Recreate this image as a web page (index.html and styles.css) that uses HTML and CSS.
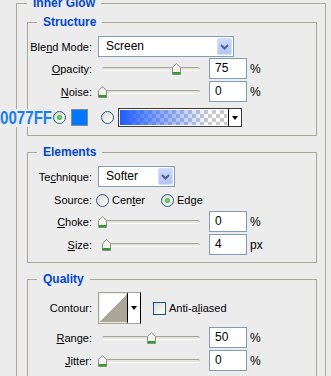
FILE: index.html
```html
<!DOCTYPE html>
<html lang="en">
  <head>
    <meta charset="UTF-8" />
    <meta name="viewport" content="width=device-width, initial-scale=1.0" />
    <title>Inner Glow</title>

    <link rel="stylesheet" href="styles.css">
  </head>
  <body>
    <fieldset class="group group--outer">
      <legend>Inner Glow</legend>

      <fieldset class="group group--structure">
        <legend>Structure</legend>
        <div class="row row--select">
          <span class="rowLabel">Ble<u>n</u>d Mode:</span>
          <div class="select select--wide">
            <span class="select__value">Screen</span>
            <span class="select__button">
              <svg width="15" height="17" viewBox="0 0 15 17"><polyline points="4,7 7.5,10.5 11,7" fill="none" stroke="#4d6185" stroke-width="2" /></svg>
            </span>
          </div>
        </div>
        <div class="row">
          <span class="rowLabel"><u>O</u>pacity:</span>
          <div class="slider">
            <span class="slider__track"></span>
            <span class="slider__thumb" style="left: 74px">
              <svg width="9" height="12" viewBox="0 0 9 12"><path d="M0.5 4.5 L4.5 0.5 L8.5 4.5 V11.5 H0.5 Z" fill="#f4f4f0" stroke="#8c8c84" /><rect x="1" y="9" width="7" height="2" fill="#21a121" /></svg>
            </span>
          </div>
          <span class="numInput">75</span>
          <span class="unit">%</span>
        </div>
        <div class="row">
          <span class="rowLabel"><u>N</u>oise:</span>
          <div class="slider">
            <span class="slider__track"></span>
            <span class="slider__thumb" style="left: 0px">
              <svg width="9" height="12" viewBox="0 0 9 12"><path d="M0.5 4.5 L4.5 0.5 L8.5 4.5 V11.5 H0.5 Z" fill="#f4f4f0" stroke="#8c8c84" /><rect x="1" y="9" width="7" height="2" fill="#21a121" /></svg>
            </span>
          </div>
          <span class="numInput">0</span>
          <span class="unit">%</span>
        </div>
        <div class="row row--color">
          <span class="hexLabel">0077FF</span>
          <span class="radio radio--checked"></span>
          <span class="swatch"></span>
          <span class="radio radio--gap"></span>
          <div class="gradientPicker">
            <span class="gradientPicker__preview"></span>
            <span class="gradientPicker__arrow"></span>
          </div>
        </div>
      </fieldset>

      <fieldset class="group">
        <legend>Elements</legend>
        <div class="row row--select">
          <span class="rowLabel">Te<u>c</u>hnique:</span>
          <div class="select select--narrow">
            <span class="select__value">Softer</span>
            <span class="select__button">
              <svg width="15" height="17" viewBox="0 0 15 17"><polyline points="4,7 7.5,10.5 11,7" fill="none" stroke="#4d6185" stroke-width="2" /></svg>
            </span>
          </div>
        </div>
        <div class="row row--radios">
          <span class="rowLabel">Source:</span>
          <span class="radio radio--source"></span>
          <span class="radioText">Cen<u>t</u>er</span>
          <span class="radio radio--checked radio--edge"></span>
          <span class="radioText">Ed<u>g</u>e</span>
        </div>
        <div class="row">
          <span class="rowLabel"><u>C</u>hoke:</span>
          <div class="slider">
            <span class="slider__track"></span>
            <span class="slider__thumb" style="left: 0px">
              <svg width="9" height="12" viewBox="0 0 9 12"><path d="M0.5 4.5 L4.5 0.5 L8.5 4.5 V11.5 H0.5 Z" fill="#f4f4f0" stroke="#8c8c84" /><rect x="1" y="9" width="7" height="2" fill="#21a121" /></svg>
            </span>
          </div>
          <span class="numInput">0</span>
          <span class="unit">%</span>
        </div>
        <div class="row">
          <span class="rowLabel"><u>S</u>ize:</span>
          <div class="slider">
            <span class="slider__track"></span>
            <span class="slider__thumb" style="left: 4px">
              <svg width="9" height="12" viewBox="0 0 9 12"><path d="M0.5 4.5 L4.5 0.5 L8.5 4.5 V11.5 H0.5 Z" fill="#f4f4f0" stroke="#8c8c84" /><rect x="1" y="9" width="7" height="2" fill="#21a121" /></svg>
            </span>
          </div>
          <span class="numInput">4</span>
          <span class="unit">px</span>
        </div>
      </fieldset>

      <fieldset class="group group--quality">
        <legend>Quality</legend>
        <div class="row row--contour">
          <span class="rowLabel">Contour:</span>
          <div class="contour">
            <span class="contour__preview"></span>
            <span class="contour__arrow"></span>
          </div>
          <span class="checkbox"></span>
          <span class="radioText">Anti-a<u>l</u>iased</span>
        </div>
        <div class="row">
          <span class="rowLabel"><u>R</u>ange:</span>
          <div class="slider">
            <span class="slider__track"></span>
            <span class="slider__thumb" style="left: 49px">
              <svg width="9" height="12" viewBox="0 0 9 12"><path d="M0.5 4.5 L4.5 0.5 L8.5 4.5 V11.5 H0.5 Z" fill="#f4f4f0" stroke="#8c8c84" /><rect x="1" y="9" width="7" height="2" fill="#21a121" /></svg>
            </span>
          </div>
          <span class="numInput">50</span>
          <span class="unit">%</span>
        </div>
        <div class="row">
          <span class="rowLabel"><u>J</u>itter:</span>
          <div class="slider">
            <span class="slider__track"></span>
            <span class="slider__thumb" style="left: 0px">
              <svg width="9" height="12" viewBox="0 0 9 12"><path d="M0.5 4.5 L4.5 0.5 L8.5 4.5 V11.5 H0.5 Z" fill="#f4f4f0" stroke="#8c8c84" /><rect x="1" y="9" width="7" height="2" fill="#21a121" /></svg>
            </span>
          </div>
          <span class="numInput">0</span>
          <span class="unit">%</span>
        </div>
      </fieldset>
    </fieldset>
  </body>
</html>
```

FILE: styles.css
```css
body {
  margin: 0;
  background-color: #ececec;
  font-family: "Liberation Sans", Arial, sans-serif;
  font-size: 11px;
  color: #000000;
  overflow: hidden;
}

.group {
  margin: 9px 0 0 0;
  padding: 0 0 6px 0;
  border: 1px solid #aca899;
  min-width: 0;
}

.group legend {
  margin-left: 9px;
  padding: 0 6px;
  font-size: 12px;
  font-weight: bold;
  line-height: 14px;
  color: #0046d5;
}

.group--outer {
  box-sizing: border-box;
  width: 310px;
  margin: -4px 0 0 16px;
  padding: 0 8px 0 10px;
}

.group--outer > legend {
  margin-left: 0;
}

.group--structure {
  margin-top: 5px;
}

.group--quality {
  padding-bottom: 12px;
}

.row {
  display: flex;
  align-items: center;
  height: 23px;
}

.rowLabel {
  flex: none;
  width: 64px;
  margin-right: 6px;
  text-align: right;
  white-space: nowrap;
}

/* selects */
.row--select {
  height: 21px;
  margin-top: 7px;
}

.select {
  display: flex;
  box-sizing: border-box;
  height: 21px;
  padding: 1px;
  border: 1px solid #7f9db9;
  background-color: #ffffff;
}

.select--wide {
  width: 136px;
}

.select--narrow {
  width: 77px;
}

.select__value {
  flex: 1;
  padding-left: 6px;
  font-size: 12px;
  line-height: 17px;
}

.select__button {
  box-sizing: border-box;
  width: 15px;
  height: 17px;
  border: 1px solid #d2defa;
  border-radius: 2px;
  background: linear-gradient(#cbdafc, #b2c6f5);
}

.select__button svg {
  display: block;
  margin: -1px 0 0 -1px;
}

/* sliders */
.slider {
  position: relative;
  flex: none;
  display: flex;
  align-items: center;
  width: 106px;
  height: 23px;
}

.slider__track {
  box-sizing: border-box;
  width: 98px;
  height: 4px;
  margin: 1px 4px 0 4px;
  border-top: 1px solid #a3a39b;
  border-bottom: 1px solid #ffffff;
  border-radius: 2px;
  background-color: #e4e3dc;
}

.slider__thumb {
  position: absolute;
  top: 6px;
  width: 9px;
  height: 12px;
}

.slider__thumb svg {
  display: block;
}

.numInput {
  flex: none;
  box-sizing: border-box;
  width: 38px;
  height: 21px;
  margin-left: 5px;
  padding-left: 5px;
  border: 1px solid #7f9db9;
  background-color: #ffffff;
  font-size: 12px;
  line-height: 19px;
}

.unit {
  margin-left: 3px;
  font-size: 12px;
}

/* colour row */
.row--color {
  margin-top: 3px;
}

.hexLabel {
  flex: none;
  width: 62px;
  margin-left: -28px;
  margin-right: -9px;
  font-size: 18px;
  font-weight: bold;
  line-height: 18px;
  color: #1a7df5;
  background-color: #ececec;
  white-space: nowrap;
  transform: scaleX(0.84);
  transform-origin: left center;
}

.radio {
  position: relative;
  flex: none;
  box-sizing: border-box;
  width: 13px;
  height: 13px;
  border: 1px solid #2b5a86;
  border-radius: 50%;
  background: linear-gradient(135deg, #d8d8d2, #ffffff);
}

.radio--checked::after {
  content: "";
  position: absolute;
  top: 3px;
  left: 3px;
  width: 5px;
  height: 5px;
  border-radius: 50%;
  background: radial-gradient(#7ce07c, #21a121);
}

.radio--gap {
  margin-left: 13px;
}

.swatch {
  flex: none;
  box-sizing: border-box;
  width: 17px;
  height: 17px;
  margin-left: 5px;
  border: 1px solid #8a8a8a;
  background-color: #0077ff;
}

.gradientPicker {
  display: flex;
  box-sizing: border-box;
  width: 124px;
  height: 19px;
  margin-left: 4px;
  border: 1px solid #3c3c3c;
  background-color: #ffffff;
}

.gradientPicker__preview {
  flex: 1;
  margin: 1px;
  background:
    linear-gradient(to right, #1f5cff 0%, rgba(31, 92, 255, 0.55) 35%, rgba(31, 92, 255, 0) 85%),
    conic-gradient(#cbcbcb 25%, #ffffff 0 50%, #cbcbcb 0 75%, #ffffff 0) 0 0 / 8px 8px;
}

.gradientPicker__arrow,
.contour__arrow {
  position: relative;
  flex: none;
  width: 12px;
  border-left: 1px solid #000000;
  background-color: #ffffff;
}

.gradientPicker__arrow::after,
.contour__arrow::after {
  content: "";
  position: absolute;
  top: 50%;
  left: 3px;
  margin-top: -2px;
  border-top: 4px solid #000000;
  border-left: 3px solid transparent;
  border-right: 3px solid transparent;
}

/* source radios */
.row--radios {
  height: 20px;
  margin-top: 3px;
}

.radio--source {
  margin-left: -2px;
}

.radio--edge {
  margin-left: 16px;
}

.radioText {
  margin-left: 3px;
  white-space: nowrap;
}

/* contour */
.row--contour {
  height: 32px;
  margin-top: 6px;
  margin-bottom: 2px;
}

.contour {
  display: flex;
  flex: none;
  box-sizing: border-box;
  width: 43px;
  height: 32px;
  border: 1px solid #a4a39a;
  border-right-color: #000000;
}

.contour__preview {
  flex: 1;
  margin: 1px 0 1px 1px;
  background: linear-gradient(to top left, #aaa798 50%, #ffffff 50%);
}

.checkbox {
  flex: none;
  box-sizing: border-box;
  width: 13px;
  height: 13px;
  margin-left: 12px;
  border: 1px solid #1c5180;
  background: linear-gradient(135deg, #dcdcd5, #ffffff);
}
```
